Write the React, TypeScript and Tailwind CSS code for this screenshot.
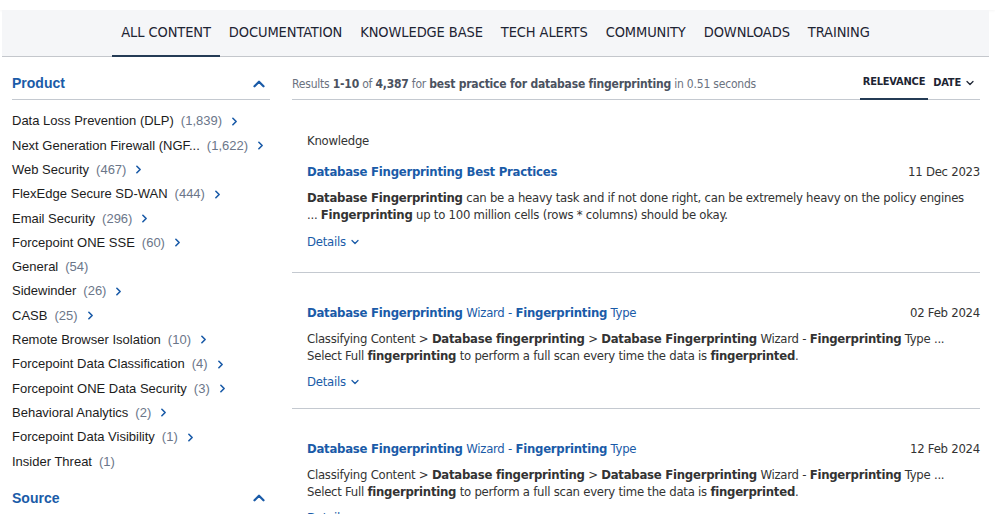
import React from "react";
import { ChevronRight, ChevronUp, ChevronDown } from "lucide-react";

const narrow = { fontFamily: '"DejaVu Sans Condensed", "Liberation Sans", sans-serif' };

const tabs = ["ALL CONTENT", "DOCUMENTATION", "KNOWLEDGE BASE", "TECH ALERTS", "COMMUNITY", "DOWNLOADS", "TRAINING"];

const products: [string, string, boolean][] = [
  ["Data Loss Prevention (DLP)", "(1,839)", true],
  ["Next Generation Firewall (NGF...", "(1,622)", true],
  ["Web Security", "(467)", true],
  ["FlexEdge Secure SD-WAN", "(444)", true],
  ["Email Security", "(296)", true],
  ["Forcepoint ONE SSE", "(60)", true],
  ["General", "(54)", false],
  ["Sidewinder", "(26)", true],
  ["CASB", "(25)", true],
  ["Remote Browser Isolation", "(10)", true],
  ["Forcepoint Data Classification", "(4)", true],
  ["Forcepoint ONE Data Security", "(3)", true],
  ["Behavioral Analytics", "(2)", true],
  ["Forcepoint Data Visibility", "(1)", true],
  ["Insider Threat", "(1)", false],
];

function B({ children }: { children: React.ReactNode }) {
  return <span className="font-bold">{children}</span>;
}

function Details({ first }: { first?: boolean }) {
  return (
    <div className={(first ? "mt-[10px] " : "mt-[9px] ") + "h-[17px] flex items-center gap-[3px] text-[13px] text-[#1a5ba8]"}>
      Details <ChevronDown size={12} strokeWidth={2.5} className="mt-[1px]" />
    </div>
  );
}

function WizardBody() {
  return (
    <div className="mt-[9px] text-[13px] leading-[17px] text-[#333333]">
      Classifying Content &gt; <B>Database fingerprinting</B> &gt; <B>Database Fingerprinting</B> Wizard - <B>Fingerprinting</B> Type ...
      <br />
      Select Full <B>fingerprinting</B> to perform a full scan every time the data is <B>fingerprinted</B>.
    </div>
  );
}

function WizardTitle({ date }: { date: string }) {
  return (
    <div className="h-[17px] flex items-center justify-between text-[13px]">
      <div className="text-[#1a5ba8]">
        <B>Database Fingerprinting</B> Wizard - <B>Fingerprinting</B> Type
      </div>
      <div className="text-[#333333]">{date}</div>
    </div>
  );
}

export default function App() {
  return (
    <div className="w-[995px] h-[514px] overflow-hidden bg-white" style={{ fontFamily: '"Liberation Sans", Arial, sans-serif' }}>
      <div className="h-[10px] bg-white shadow-[0_1px_3px_rgba(0,0,0,0.04)]" />
      <nav className="ml-[2px] mr-[6px] h-[47px] bg-[#f5f6f8] border-b border-[#c4c7cc] flex justify-center tracking-[-0.1px]" style={narrow}>
        {tabs.map((t, i) => (
          <div
            key={t}
            className={
              "px-[9px] flex items-center text-[14.5px] text-[#1d2433] " +
              (i === 0 ? "border-b-2 border-[#243b55] -mb-px" : "")
            }
          >
            {t}
          </div>
        ))}
      </nav>

      <div className="flex">
        <aside className="w-[258px] ml-[12px] shrink-0">
          <div className="mt-[13px] h-[30px] flex items-center justify-between border-b border-[#c4c9d0] pb-[2px]">
            <span className="text-[14px] font-bold text-[#1a5ba8]">Product</span>
            <ChevronUp size={18} strokeWidth={3} className="text-[#1a5ba8] mr-[2px]" />
          </div>
          <ul className="mt-[9px]">
            {products.map(([name, count, arrow]) => (
              <li key={name} className="h-[24.3px] flex items-center text-[13px] text-[#1c1c1c]">
                <span>{name}</span>
                <span className="ml-[7px] text-[#6b7689]">{count}</span>
                {arrow && <ChevronRight size={13} strokeWidth={3} className="ml-[6px] text-[#1a5ba8]" />}
              </li>
            ))}
          </ul>
          <div className="mt-[10px] h-[30px] flex items-center justify-between">
            <span className="text-[14px] font-bold text-[#1a5ba8]">Source</span>
            <ChevronUp size={18} strokeWidth={3} className="text-[#1a5ba8] mr-[2px]" />
          </div>
        </aside>

        <main className="ml-[22px] w-[688px] shrink-0 tracking-[-0.25px]" style={narrow}>
          <div className="mt-[13px] h-[30px] flex items-center justify-between border-b border-[#c4c9d0] tracking-[-0.2px]">
            <div className="pb-[1px] text-[12px] text-[#6b7280]">
              Results <span className="font-bold text-[#4b5260]">1-10</span> of <span className="font-bold text-[#4b5260]">4,387</span> for{" "}
              <span className="font-bold text-[#4b5260]">best practice for database fingerprinting</span> in 0.51 seconds
            </div>
            <div className="flex h-full items-stretch text-[11px] font-bold text-[#1d2433]">
              <div className="px-[3px] pb-[3px] flex items-center border-b-2 border-[#243b55] -mb-px">RELEVANCE</div>
              <div className="pl-[5px] pr-[4px] pb-[3px] flex items-center gap-[3px]">
                DATE <ChevronDown size={12} strokeWidth={2.5} />
              </div>
            </div>
          </div>

          <section className="pl-[15px] pt-[32px] pb-[22px] border-b border-[#c4c9d0]">
            <div className="h-[17px] flex items-center text-[13px] text-[#333333]">Knowledge</div>
            <div className="mt-[14px] h-[17px] flex items-center justify-between text-[13px]">
              <div className="text-[#1a5ba8] font-bold">Database Fingerprinting Best Practices</div>
              <div className="text-[#333333]">11 Dec 2023</div>
            </div>
            <div className="mt-[9px] text-[13px] leading-[17px] text-[#333333] whitespace-nowrap">
              <B>Database Fingerprinting</B> can be a heavy task and if not done right, can be extremely heavy on the policy engines
              <br />... <B>Fingerprinting</B> up to 100 million cells (rows * columns) should be okay.
            </div>
            <Details first />
          </section>

          <section className="pl-[15px] pt-[31px] pb-[18px] border-b border-[#c4c9d0]">
            <WizardTitle date="02 Feb 2024" />
            <WizardBody />
            <Details />
          </section>

          <section className="pl-[15px] pt-[31px] pb-[20px]">
            <WizardTitle date="12 Feb 2024" />
            <WizardBody />
            <Details />
          </section>
        </main>
      </div>
    </div>
  );
}
